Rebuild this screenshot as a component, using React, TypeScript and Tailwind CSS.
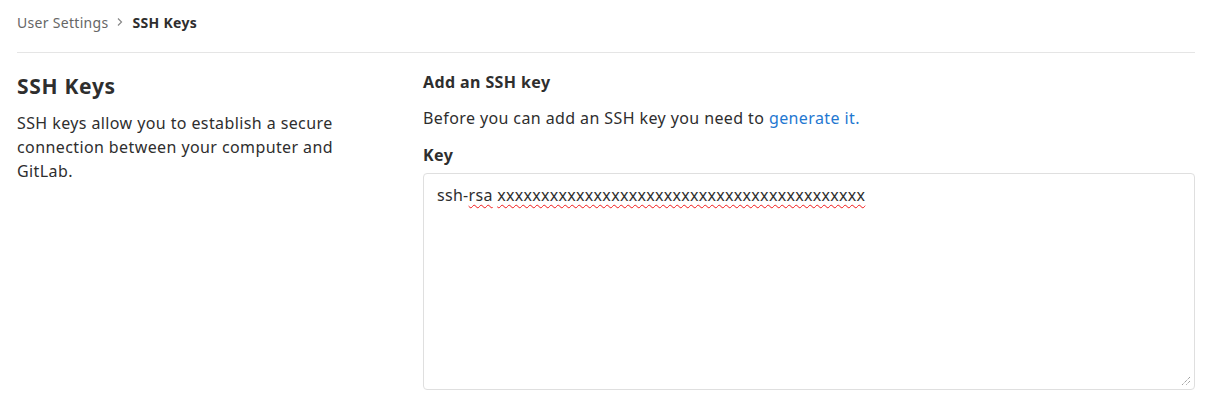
export default function App() {
  const keyText = "x".repeat(42);

  return (
    <div
      className="min-h-screen w-full bg-white px-[17px] text-[#2e2e2e]"
      style={{ fontFamily: '"Noto Sans", "Open Sans", sans-serif' }}
    >
      {/* Breadcrumb */}
      <nav className="flex h-[53px] items-center border-b border-[#e5e5e5] pb-[8px] text-[14px] tracking-[0.3px]">
        <span className="text-[#666666]">User Settings</span>
        <svg
          className="mx-[8px] text-[#888888]"
          width="8"
          height="10"
          viewBox="0 0 8 10"
          fill="none"
        >
          <path d="M2 1.5 5.5 5 2 8.5" stroke="currentColor" strokeWidth="1.2" />
        </svg>
        <span className="font-bold text-[#2e2e2e]">SSH Keys</span>
      </nav>

      <div className="flex pt-[17px] tracking-[0.4px]">
        {/* Left column */}
        <div className="w-[406px] shrink-0 pr-[60px]">
          <h4 className="mt-[4px] text-[21px] leading-[24px] font-bold tracking-[0.7px]">
            SSH Keys
          </h4>
          <p className="mt-[13px] text-[16px] leading-[24px]">
            SSH keys allow you to establish a secure connection between your
            computer and GitLab.
          </p>
        </div>

        {/* Right column */}
        <div className="flex-1">
          <h5 className="text-[16px] leading-[24px] font-bold">Add an SSH key</h5>
          <p className="mt-[12px] text-[16px] leading-[24px]">
            Before you can add an SSH key you need to{" "}
            <a href="#" className="text-[#1f78d1]">
              generate it.
            </a>
          </p>
          <label className="mt-[13px] block text-[16px] leading-[24px] font-bold">Key</label>
          <div className="relative mt-[6px] h-[217px] rounded-[4px] border border-[#dfdfdf] bg-white px-[13px] pt-[9px] text-[16px] leading-[24px] tracking-[0.3px]">
            <span>ssh-</span>
            <span className="underline decoration-wavy decoration-[#f01818] decoration-1 underline-offset-[3px]">
              rsa
            </span>{" "}
            <span className="underline decoration-wavy decoration-[#f01818] decoration-1 underline-offset-[3px]">
              {keyText}
            </span>
            <svg
              className="absolute right-[3px] bottom-[3px]"
              width="10"
              height="10"
              viewBox="0 0 10 10"
            >
              <path d="M9 1 1 9M9 5 5 9" stroke="#777" strokeWidth="1" strokeDasharray="1 1" />
            </svg>
          </div>
        </div>
      </div>
    </div>
  );
}
